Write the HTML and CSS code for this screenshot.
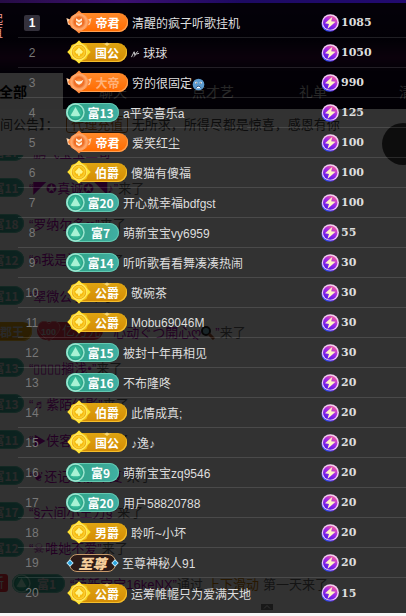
FILE: index.html
```html
<!DOCTYPE html>
<html lang="zh-CN">
<head>
  <meta charset="UTF-8">
  <meta name="viewport" content="width=device-width, initial-scale=1.0">
  <title>贡献榜</title>
  <link rel="stylesheet" href="styles.css">
</head>
<body>
  <!-- shared icons -->
  <svg class="defs" width="0" height="0" aria-hidden="true">
    <defs>
      <linearGradient id="coin-fill" x1="0.8" y1="0" x2="0.2" y2="1">
        <stop offset="0" stop-color="#ff5f9a"/>
        <stop offset="0.45" stop-color="#a32be6"/>
        <stop offset="1" stop-color="#4a12e8"/>
      </linearGradient>
      <linearGradient id="coin-edge" x1="0" y1="0" x2="1" y2="0">
        <stop offset="0" stop-color="#4a5cff"/>
        <stop offset="0.5" stop-color="#2a36e0"/>
        <stop offset="1" stop-color="#c030e0"/>
      </linearGradient>
      <radialGradient id="gold-fill">
        <stop offset="0" stop-color="#ffe14a"/>
        <stop offset="0.6" stop-color="#f4b70c"/>
        <stop offset="1" stop-color="#ffd93b"/>
      </radialGradient>
      <radialGradient id="orange-fill">
        <stop offset="0" stop-color="#ffa04a"/>
        <stop offset="0.6" stop-color="#ee6a22"/>
        <stop offset="1" stop-color="#ffae70"/>
      </radialGradient>
      <symbol id="coin" viewBox="0 0 18 18">
        <ellipse cx="8.7" cy="9.8" rx="8.2" ry="8" fill="url(#coin-edge)"/>
        <ellipse cx="9.4" cy="8.4" rx="8.5" ry="8.2" fill="#f3cdf2"/>
        <ellipse cx="9.2" cy="8.7" rx="7.2" ry="7" fill="url(#coin-fill)"/>
        <path d="M11.4 2.8 4 9.3 8 10 6.4 15 14.6 7.7 10.2 7.2Z" fill="#fff3c4"/>
      </symbol>
      <symbol id="medal-green" viewBox="0 0 19 19">
        <circle cx="9.5" cy="9.5" r="9.2" fill="#9ce5cf"/>
        <circle cx="9.5" cy="9.5" r="7.7" fill="#2ba487"/>
        <circle cx="9.5" cy="9.5" r="6.3" fill="#35b796"/>
        <path d="M9.5 4 14.4 12.4Q9.5 14.2 4.6 12.4Z" fill="#a8f2d4"/>
      </symbol>
      <symbol id="medal-gold" viewBox="0 0 24 24">
        <path d="M12 0.5 15 3.2 19.4 4.9 21 9 23.6 12 21 15 19.4 19.1 15 20.8 12 23.5 9 20.8 4.6 19.1 3 15 0.4 12 3 9 4.6 4.9 9 3.2Z" fill="#f2c516"/>
        <path d="M12 0.5 15.5 4 20 8.5 23.6 12 20 15.5 15.5 20 12 23.5 8.5 20 4 15.5 0.4 12 4 8.5 8.5 4Z" fill="#ffe436"/>
        <circle cx="12" cy="12" r="8.4" fill="#ffe968"/>
        <circle cx="12" cy="12" r="7.2" fill="#e8a50c"/>
        <circle cx="12" cy="12" r="6.4" fill="url(#gold-fill)"/>
        <path d="M12 7.5 14 9.8 16 11.8 14.5 13.8 12.8 13.6 13 15.8 11 15.8 11.2 13.6 9.5 13.8 8 11.8 10 9.8Z" fill="#fff58c"/>
      </symbol>
      <symbol id="medal-orange" viewBox="0 0 26 24">
        <path d="M0.4 8 4 9.5 4.5 15.5 2 14.5ZM25.6 8 22 9.5 21.5 15.5 24 14.5Z" fill="#ffd0a8"/>
        <path d="M13 0.5 16.5 3.8 20.8 6.6 22.3 9.6 24 12 22.3 14.4 20.8 17.4 16.5 20.2 13 23.5 9.5 20.2 5.2 17.4 3.7 14.4 2 12 3.7 9.6 5.2 6.6 9.5 3.8Z" fill="#ff8a3c"/>
        <circle cx="13" cy="12" r="8.8" fill="#ffa466"/>
        <circle cx="13" cy="12" r="7.4" fill="url(#orange-fill)"/>
      </symbol>
      <symbol id="medal-orange-two" viewBox="0 0 26 24">
        <use href="#medal-orange"/>
        <path d="M10 8.3 13 10.2 16 8.3V10.6L13 12.5 10 10.6ZM10 12 13 13.9 16 12V14.3L13 16.2 10 14.3Z" fill="#fff0dc"/>
      </symbol>
      <symbol id="medal-orange-one" viewBox="0 0 26 24">
        <use href="#medal-orange"/>
        <path d="M8.5 9.8Q13 13 17.5 9.8 16.5 13.5 13 14.8 9.5 13.5 8.5 9.8Z" fill="#fff0dc"/>
      </symbol>
      <symbol id="gem" viewBox="0 0 8 8">
        <path d="M4 0.3 7.7 4 4 7.7 0.3 4Z" fill="#bfeaff"/>
        <path d="M4 1.6 6.4 4 4 6.4 1.6 4Z" fill="#2aa3dc"/>
      </symbol>
      <symbol id="crown" viewBox="0 0 10 4">
        <path d="M0 1.2 2.5 1.8 5 0.4 7.5 1.8 10 1.2 7 2.6 5 4 3 2.6Z" fill="#f6d878"/>
      </symbol>
    </defs>
  </svg>

  <div class="stage">
    <main class="live">
      <div class="banner"></div>
      <nav class="tabs">
        <button class="tab active" type="button">全部</button>
        <button class="tab" type="button">聊天</button>
        <button class="tab" type="button">点才艺</button>
        <button class="tab" type="button">礼单</button>
        <button class="tab" type="button">清单</button>
      </nav>
      <p class="notice">间公告】： <span class="tag">代理充值</span> 无所求，所得尽都是惊喜，感恩有你</p>
      <ul class="feed">
        <li><span class="badge green"><svg class="medal"><use href="#medal-green"/></svg>富17</span><span class="who">“鹏飞宝宝三哥”</span></li>
        <li><span class="badge green"><svg class="medal"><use href="#medal-green"/></svg>富11</span><span class="who">“◤✪真诚✪◥♪”</span>来了</li>
        <li><span class="badge green"><svg class="medal"><use href="#medal-green"/></svg>富18</span><span class="who">“罗纳尔多ღ”</span>来了</li>
        <li><span class="badge green"><svg class="medal"><use href="#medal-green"/></svg>富12</span><span class="who">“ด我是清风”</span>来了</li>
        <li><span class="badge green"><svg class="medal"><use href="#medal-green"/></svg>富11</span><span class="who">“翠微公子”</span>来了</li>
        <li><span class="badge gold"><svg class="medal"><use href="#medal-gold"/></svg>郡王</span><span class="fans"><svg class="heart" viewBox="0 0 24 22"><path d="M12 21C4 15 1 11 1 7A6 6 0 0 1 12 4 6 6 0 0 1 23 7C23 11 20 15 12 21Z" fill="#f0405a" stroke="#ff8a94"/></svg><b>100</b>亿万元</span><span class="who">“心动ぐつ開心ღ<svg class="lens" viewBox="0 0 14 14"><circle cx="5" cy="5" r="4" fill="#7fb9c9" stroke="#222" stroke-width="2"/><path d="M8 8 13 13" stroke="#a0522d" stroke-width="3"/></svg>”</span>来了</li>
        <li><span class="badge green"><svg class="medal"><use href="#medal-green"/></svg>富13</span><span class="who">“▯▯▯▯搁浅•”</span>来了</li>
        <li><span class="badge green"><svg class="medal"><use href="#medal-green"/></svg>富13</span><span class="who">“♬紫陌纤影”</span>来了</li>
        <li><span class="badge green"><svg class="medal"><use href="#medal-green"/></svg>富11</span><span class="who">“▶侠客小宝”</span>来了</li>
        <li><span class="badge green"><svg class="medal"><use href="#medal-green"/></svg>富11</span><span class="who">“❦还记得那年夏”</span>来了</li>
        <li><span class="badge green"><svg class="medal"><use href="#medal-green"/></svg>富17</span><span class="who">“§六间小王力§”</span>来了</li>
        <li><span class="badge green"><svg class="medal"><use href="#medal-green"/></svg>富12</span><span class="who">“☠唯她不爱”</span>来了</li>
        <li><span class="new">新</span><span class="badge green"><svg class="medal"><use href="#medal-green"/></svg>富1</span><span class="who">“萌新宝宝16keNX”</span>通过<span class="via">上下滑动</span>第一天来了</li>
      </ul>
      <button class="more" type="button" aria-label="展开"><svg viewBox="0 0 12 6"><path d="M3 4.5 6 1.5 9 4.5" fill="none" stroke="#fff"/></svg></button>
    </main>

    <div class="bubble"></div>

    <section class="panel">
      <p class="side">起直</p>
      <ol class="ranks">
        <li class="row"><span class="rank first">1</span><span class="badge orange"><svg class="medal"><use href="#medal-orange-two"/></svg>帝君</span><span class="name">清醒的疯子听歌挂机</span><span class="score"><svg class="coin"><use href="#coin"/></svg>1085</span></li>
        <li class="row"><span class="rank">2</span><span class="badge gold"><svg class="medal"><use href="#medal-gold"/></svg><svg class="crown"><use href="#crown"/></svg>国公</span><span class="name"><svg class="mark" viewBox="0 0 10 8"><path d="M0.5 7.5 3.5 1.5 4.2 5 7.5 1M3 7 6 4 9 3.2" fill="none" stroke="#ddd"/></svg> 球球</span><span class="score"><svg class="coin"><use href="#coin"/></svg>1050</span></li>
        <li class="row"><span class="rank">3</span><span class="badge orange faint"><svg class="medal"><use href="#medal-orange-one"/></svg>大帝</span><span class="name">穷的很固定<svg class="face" viewBox="0 0 14 14"><circle cx="7" cy="7" r="6.3" fill="#5b9bd0"/><circle cx="4.6" cy="5.2" r="1.2" fill="#fff"/><circle cx="9.4" cy="5.2" r="1.2" fill="#fff"/><path d="M4 11Q7 6.5 10 11" fill="#fff" stroke="#274a75"/><circle cx="4.8" cy="5.4" r="0.6" fill="#222"/><circle cx="9.2" cy="5.4" r="0.6" fill="#222"/></svg></span><span class="score"><svg class="coin"><use href="#coin"/></svg>990</span></li>
        <li class="row"><span class="rank">4</span><span class="badge green"><svg class="medal"><use href="#medal-green"/></svg>富13</span><span class="name">a平安喜乐a</span><span class="score"><svg class="coin"><use href="#coin"/></svg>125</span></li>
        <li class="row"><span class="rank">5</span><span class="badge orange"><svg class="medal"><use href="#medal-orange-two"/></svg>帝君</span><span class="name">爱笑红尘</span><span class="score"><svg class="coin"><use href="#coin"/></svg>100</span></li>
        <li class="row"><span class="rank">6</span><span class="badge gold"><svg class="medal"><use href="#medal-gold"/></svg>伯爵</span><span class="name">傻猫有傻福</span><span class="score"><svg class="coin"><use href="#coin"/></svg>100</span></li>
        <li class="row"><span class="rank">7</span><span class="badge green"><svg class="medal"><use href="#medal-green"/></svg>富20</span><span class="name">开心就幸福bdfgst</span><span class="score"><svg class="coin"><use href="#coin"/></svg>100</span></li>
        <li class="row"><span class="rank">8</span><span class="badge green"><svg class="medal"><use href="#medal-green"/></svg>富7</span><span class="name">萌新宝宝vy6959</span><span class="score"><svg class="coin"><use href="#coin"/></svg>55</span></li>
        <li class="row"><span class="rank">9</span><span class="badge green"><svg class="medal"><use href="#medal-green"/></svg>富14</span><span class="name">听听歌看看舞凑凑热闹</span><span class="score"><svg class="coin"><use href="#coin"/></svg>30</span></li>
        <li class="row"><span class="rank">10</span><span class="badge gold"><svg class="medal"><use href="#medal-gold"/></svg><svg class="crown"><use href="#crown"/></svg>公爵</span><span class="name">敬碗茶</span><span class="score"><svg class="coin"><use href="#coin"/></svg>30</span></li>
        <li class="row"><span class="rank">11</span><span class="badge gold"><svg class="medal"><use href="#medal-gold"/></svg><svg class="crown"><use href="#crown"/></svg>公爵</span><span class="name">Mobu69046M</span><span class="score"><svg class="coin"><use href="#coin"/></svg>30</span></li>
        <li class="row"><span class="rank">12</span><span class="badge green"><svg class="medal"><use href="#medal-green"/></svg>富15</span><span class="name">被封十年再相见</span><span class="score"><svg class="coin"><use href="#coin"/></svg>30</span></li>
        <li class="row"><span class="rank">13</span><span class="badge green"><svg class="medal"><use href="#medal-green"/></svg>富16</span><span class="name">不布隆咚</span><span class="score"><svg class="coin"><use href="#coin"/></svg>20</span></li>
        <li class="row"><span class="rank">14</span><span class="badge gold"><svg class="medal"><use href="#medal-gold"/></svg>伯爵</span><span class="name">此情成真;</span><span class="score"><svg class="coin"><use href="#coin"/></svg>20</span></li>
        <li class="row"><span class="rank">15</span><span class="badge gold"><svg class="medal"><use href="#medal-gold"/></svg><svg class="crown"><use href="#crown"/></svg>国公</span><span class="name">♪逸♪</span><span class="score"><svg class="coin"><use href="#coin"/></svg>20</span></li>
        <li class="row"><span class="rank">16</span><span class="badge green"><svg class="medal"><use href="#medal-green"/></svg>富9</span><span class="name">萌新宝宝zq9546</span><span class="score"><svg class="coin"><use href="#coin"/></svg>20</span></li>
        <li class="row"><span class="rank">17</span><span class="badge green"><svg class="medal"><use href="#medal-green"/></svg>富20</span><span class="name">用户58820788</span><span class="score"><svg class="coin"><use href="#coin"/></svg>20</span></li>
        <li class="row"><span class="rank">18</span><span class="badge gold"><svg class="medal"><use href="#medal-gold"/></svg>男爵</span><span class="name">聆听~小坏</span><span class="score"><svg class="coin"><use href="#coin"/></svg>20</span></li>
        <li class="row"><span class="rank">19</span><span class="badge supreme"><svg class="gem left"><use href="#gem"/></svg>至尊<svg class="gem right"><use href="#gem"/></svg></span><span class="name">至尊神秘人91</span><span class="score"><svg class="coin"><use href="#coin"/></svg>20</span></li>
        <li class="row"><span class="rank">20</span><span class="badge gold"><svg class="medal"><use href="#medal-gold"/></svg><svg class="crown"><use href="#crown"/></svg>公爵</span><span class="name">运筹帷幄只为爱满天地</span><span class="score"><svg class="coin"><use href="#coin"/></svg>15</span></li>
      </ol>
    </section>
  </div>
</body>
</html>
```

FILE: styles.css
```css
* {
  box-sizing: border-box;
}
body {
  margin: 0;
  background: #f7f7f7;
  font-family: "Liberation Sans", "Noto Sans CJK SC", sans-serif;
  font-size: 12px;
  overflow-x: hidden;
}
ul, ol, p {
  margin: 0;
  padding: 0;
  list-style: none;
}
.defs {
  position: absolute;
}

/* live room and ranking panel share one cell, the panel is on top */
.stage {
  display: grid;
  grid-template-columns: minmax(0, 1fr);
  position: relative;
  overflow: hidden;
}
.live, .panel {
  grid-area: 1 / 1;
}
.live {
  background:
    linear-gradient(100deg, #260c46 0%, #3c1070 30%, #1d0a62 60%, #220a70 100%) 0 0 / 100% 3px no-repeat,
    linear-gradient(#170734 0, #0d0420 40px, #38083c 58px, #0c0420 72px, #0a0418 109px) 0 0 / 100% 109px no-repeat,
    #fafafa;
  font-size: 13px;
  color: #666;
}
.banner {
  height: 73px;
}
.tabs {
  display: flex;
  height: 36px;
  margin-left: -37px;
}
.tab {
  flex: 0 0 100px;
  border: 0;
  padding: 0;
  background: none;
  color: #c0c0c0;
  font-family: inherit;
  font-size: 14px;
}
.tab.active {
  background: #f2f2f2;
  color: #000;
  font-weight: bold;
}
.notice {
  height: 46px;
  padding-top: 6px;
  line-height: 20px;
  white-space: nowrap;
  color: #444;
}
.tag {
  margin-left: 4px;
  padding: 0 4px;
  border: 1px solid #b56a20;
  border-radius: 3px;
  color: #b56a20;
}
.feed {
  overflow: hidden;
}
.feed li {
  display: flex;
  align-items: center;
  height: 36px;
  margin-left: -29px;
  white-space: nowrap;
}
.feed li:first-child {
  margin-top: -22px;
}
.feed .badge {
  margin-right: 5px;
  color: #ccc;
}
.who {
  color: #b000b0;
}
.via {
  margin: 0 4px;
  color: #c77700;
}
.lens {
  width: 14px;
  height: 14px;
  vertical-align: middle;
}
.fans {
  position: relative;
  width: 66px;
  height: 18px;
  margin-right: 6px;
  border-radius: 9px;
  background: #e8324a;
  color: #ccc;
  line-height: 18px;
}
.heart {
  position: absolute;
  left: 0;
  top: -2px;
  width: 24px;
  height: 22px;
}
.fans b {
  position: relative;
  margin: 0 6px 0 4px;
  font-size: 9px;
}
.new {
  width: 37px;
  height: 18px;
  margin-right: 4px;
  padding-right: 4px;
  border-radius: 3px;
  background: #f0303c;
  color: #ddd;
  line-height: 18px;
  text-align: right;
}
.more {
  display: block;
  width: 12px;
  height: 6px;
  margin: 3px auto 0 261px;
  padding: 0;
  border: 0;
  background: #777;
}
.more svg {
  display: block;
}
.bubble {
  position: absolute;
  top: 123px;
  right: -18px;
  width: 42px;
  height: 42px;
  border-radius: 50%;
  background: #444;
}

/* ranking panel */
.panel {
  position: relative;
  margin-top: 3px;
  padding: 5px 0 5px 18px;
  background: rgba(0, 0, 0, 0.8);
}
.side {
  position: absolute;
  left: -9px;
  top: 11px;
  width: 12px;
  color: #f09a92;
  line-height: 13px;
}
.row {
  display: flex;
  align-items: center;
  height: 30px;
  border-bottom: 1px solid rgba(255, 255, 255, 0.12);
}
.row:last-child {
  border-bottom: 0;
}
.rank {
  width: 16px;
  margin: 0 26px 0 6px;
  color: #777;
  line-height: 16px;
  text-align: center;
}
.rank.first {
  border-radius: 2px;
  background: #34313c;
  color: #fff;
  font-weight: bold;
}
.name {
  flex: 1;
  color: #dedede;
  white-space: nowrap;
}
.mark {
  width: 9px;
  height: 8px;
}
.face {
  width: 13px;
  height: 13px;
  vertical-align: -3px;
}
.score {
  display: flex;
  align-items: center;
  gap: 2px;
  width: 85px;
  color: #dedede;
  font: bold 11px "DejaVu Serif", serif;
}
.coin {
  width: 18px;
  height: 18px;
}

/* level badges */
.badge {
  position: relative;
  flex: none;
  height: 19px;
  color: #fff;
  font: bold 12px/19px "Noto Sans CJK SC", sans-serif;
  text-align: center;
}
.badge .medal {
  position: absolute;
  left: 0;
  top: 0;
}
.green {
  width: 53px;
  margin-right: 4px;
  padding-left: 16px;
  border-radius: 10px;
  background: linear-gradient(90deg, #2ba487, #3aa793 60%, #3fb0a4);
  box-shadow: inset 0 0 0 1px #64c8b0;
}
.green .medal {
  width: 19px;
  height: 19px;
}
.gold, .orange {
  width: 50px;
  margin-left: 11px;
  margin-right: 4px;
  padding-left: 10px;
  border-radius: 3px 9px 9px 3px;
}
.gold {
  background: linear-gradient(#dfa411, #d48c05);
  box-shadow: inset -1px -1px 0 #f3bd2c;
}
.orange {
  width: 51px;
  background: linear-gradient(#ff8a2a, #ff6a00);
  box-shadow: inset -1px -1px 0 #ffa050;
}
.badge.gold .medal {
  left: -10px;
  top: -3px;
  width: 24px;
  height: 24px;
}
.badge.orange .medal {
  left: -11px;
  top: -3px;
  width: 26px;
  height: 24px;
}
.faint {
  color: #ffb27a;
}
.crown {
  position: absolute;
  left: 25px;
  top: -1px;
  width: 10px;
  height: 4px;
}
.supreme {
  width: 47px;
  height: 18px;
  margin: 0 6px 0 3px;
  border: 1px solid #c79a6a;
  border-radius: 8px;
  background: #2c1b18;
  color: #f6cf9c;
  font-size: 14px;
  font-style: italic;
  font-weight: 900;
  line-height: 16px;
}
.gem {
  position: absolute;
  top: 4px;
  width: 8px;
  height: 8px;
}
.gem.left {
  left: -4px;
}
.gem.right {
  right: -4px;
}
```
